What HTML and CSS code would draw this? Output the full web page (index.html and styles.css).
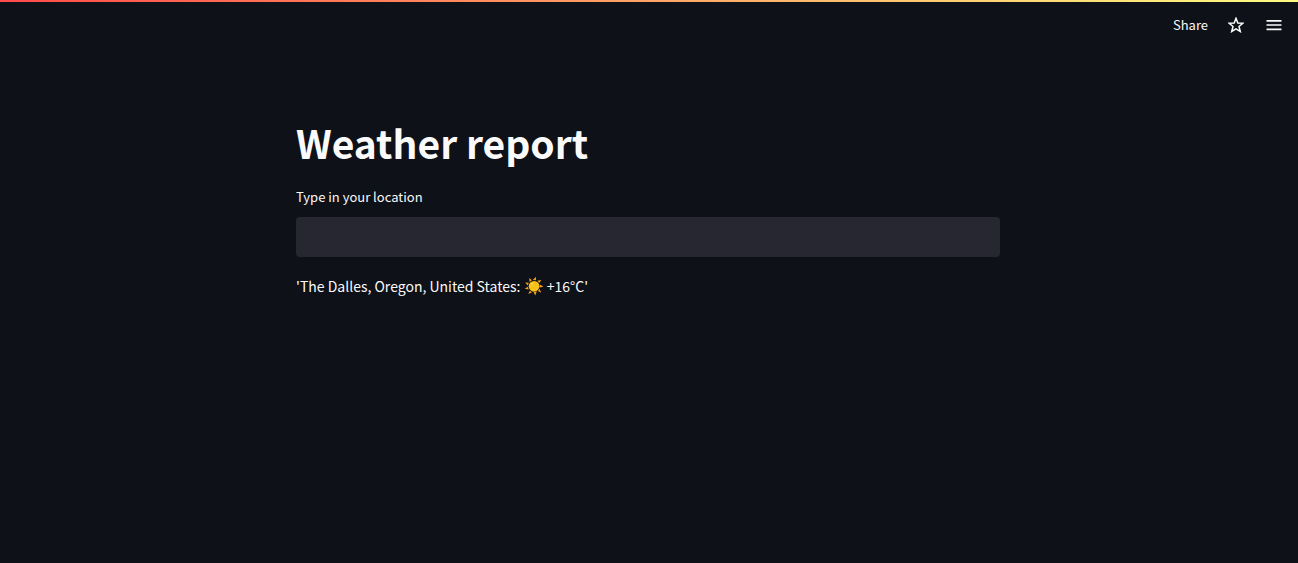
FILE: index.html
```html
<!DOCTYPE html>
<html lang="en">
<head>
<meta charset="utf-8">
<meta name="viewport" content="width=device-width, initial-scale=1">
<title>Weather report</title>
<link rel="stylesheet" href="styles.css">
</head>
<body>
<div class="decoration"></div>
<header class="toolbar">
  <button class="share" type="button">Share</button>
  <button class="icon-button" type="button" aria-label="Favorite">
    <svg class="star" viewBox="0 0 16 16" aria-hidden="true"><path d="M8 1.3L9.8 6L14.9 6.3L11 9.5L12.3 14.5L8 11.8L3.7 14.5L5 9.5L1.1 6.3L6.2 6Z"/></svg>
  </button>
  <button class="icon-button" type="button" aria-label="Menu">
    <svg class="menu" viewBox="0 0 16 16" aria-hidden="true"><path d="M.5 3.8H15.5M.5 8H15.5M.5 12.3H15.5"/></svg>
  </button>
</header>
<main class="content">
  <h1 class="title">Weather report</h1>
  <label class="field-label" for="location">Type in your location</label>
  <input class="field" id="location" type="text">
  <p class="report">'The Dalles, Oregon, United States: <svg class="sun" viewBox="0 0 20 20" role="img" aria-label="Sunny"><path class="rays" d="M12.1.8L11.9 4.3L8.8 4.1ZM17.3 4.1L15.3 7L13.2 4.8ZM19.5 10.7L15.8 11.6L15.9 8.4ZM17.1 16.7L13.9 15.1L15.8 12.9ZM11.2 19.5L9.6 16.2L12.8 15.6ZM4.3 18L5.8 14.7L8.1 16.2ZM.7 12.7L3.7 10.7L4.7 13.5ZM1.2 6.5L4.8 6.7L3.8 9.5ZM5.3 1.9L8 4.3L5.5 6Z"/><circle class="disc" cx="10.1" cy="10.3" r="5.4"/><ellipse class="shine" cx="8" cy="7.8" rx="1" ry=".6"/></svg> +16°C'</p>
</main>
</body>
</html>
```

FILE: styles.css
```css
* {
  box-sizing: border-box;
}

body {
  margin: 0;
  min-height: 100vh;
  background: #0e1117;
  color: #fafafa;
  font-family: "Source Sans Pro", "Noto Sans CJK SC", sans-serif;
  font-size: 14px;
  line-height: 24px;
}

.decoration {
  height: 2px;
  background: linear-gradient(to right, #ff4b4b, #fffd80);
}

.toolbar {
  display: flex;
  justify-content: flex-end;
  align-items: center;
  gap: 20px;
  height: 46px;
  padding-right: 16px;
}

.share,
.icon-button {
  display: flex;
  align-items: center;
  padding: 0;
  border: 0;
  background: none;
  color: inherit;
  font: inherit;
  cursor: pointer;
}

.share {
  font-size: 13px;
}

.icon-button svg {
  width: 16px;
  height: 16px;
  fill: none;
  stroke: currentColor;
}

.star {
  stroke-width: 1.5;
}

.menu {
  stroke-width: 1.7;
}

.icon-button + .icon-button {
  margin-left: 2px;
}

.content {
  max-width: 738px;
  margin: 0 auto;
  padding: 67px 18px 0 16px;
}

.title {
  margin: 0 0 16px;
  font-size: 39px;
  font-weight: 700;
  line-height: 54px;
}

.field-label {
  display: block;
  margin-bottom: 9px;
  font-size: 13px;
  line-height: 23px;
}

.field {
  display: block;
  width: 100%;
  height: 40px;
  padding: 8px 12px;
  border: 0;
  border-radius: 4px;
  background: #262730;
  color: inherit;
  font: inherit;
}

.report {
  margin: 17px 0 0;
}

.sun {
  width: 20px;
  height: 20px;
  vertical-align: -4px;
}

.rays {
  fill: #f59d1c;
}

.disc {
  fill: #fcc21b;
}

.shine {
  fill: #fff176;
}
```
